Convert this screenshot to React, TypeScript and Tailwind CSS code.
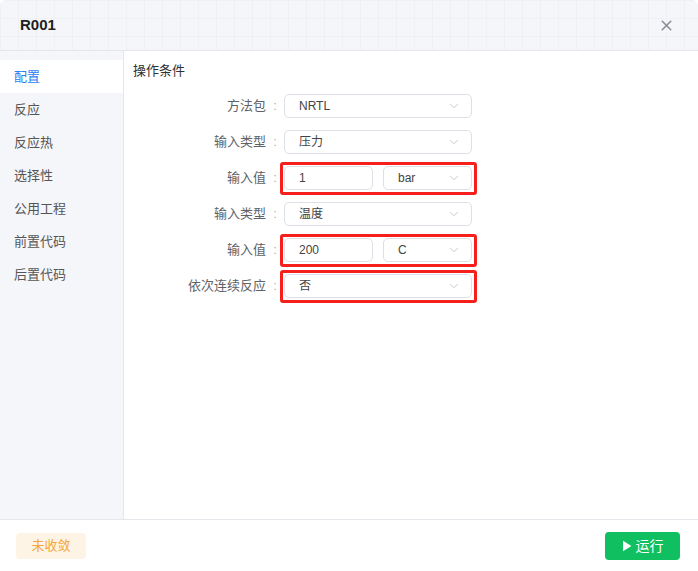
import React from 'react';
import { X, ChevronDown } from 'lucide-react';

type Field =
  | { label: string; kind: 'select'; value: string; marked?: boolean }
  | { label: string; kind: 'value'; value: string; unit: string; marked?: boolean };

const menu = ['配置', '反应', '反应热', '选择性', '公用工程', '前置代码', '后置代码'];

const fields: Field[] = [
  { label: '方法包', kind: 'select', value: 'NRTL' },
  { label: '输入类型', kind: 'select', value: '压力' },
  { label: '输入值', kind: 'value', value: '1', unit: 'bar', marked: true },
  { label: '输入类型', kind: 'select', value: '温度' },
  { label: '输入值', kind: 'value', value: '200', unit: 'C', marked: true },
  { label: '依次连续反应', kind: 'select', value: '否', marked: true },
];

function SelectBox({ value, className }: { value: string; className: string }) {
  return (
    <div
      className={`flex h-6 items-center justify-between rounded-[5px] border border-[#dcdfe6] bg-white pl-[14px] pr-[10px] text-xs text-[#444] ${className}`}
    >
      <span>{value}</span>
      <ChevronDown className="h-[14px] w-[14px] text-[#b8bcc4]" strokeWidth={1.4} />
    </div>
  );
}

function FieldRow({ field }: { field: Field }) {
  return (
    <div className="flex h-6 items-center">
      <div className="w-[133px] text-right text-[13px] text-[#606266]">{field.label}</div>
      <div className="w-[18px] text-center text-[13px] text-[#b0b3b8]">:</div>
      <div className="relative">
        {field.kind === 'select' ? (
          <SelectBox value={field.value} className="w-[188px]" />
        ) : (
          <div className="flex gap-[10px]">
            <div className="flex h-6 w-[89px] items-center rounded-[5px] border border-[#dcdfe6] bg-white pl-[14px] text-xs text-[#444]">
              {field.value}
            </div>
            <SelectBox value={field.unit} className="w-[89px]" />
          </div>
        )}
        {field.marked && (
          <div className="pointer-events-none absolute -bottom-[5px] -left-[4px] -right-[5px] -top-[4px] rounded-[3px] border-[3px] border-[#f5201b]" />
        )}
      </div>
    </div>
  );
}

export default function App() {
  return (
    <div
      className="h-[571px] w-[698px] bg-white text-[#303133]"
      style={{ fontFamily: '"Liberation Sans", "Noto Sans CJK SC", sans-serif' }}
    >
      <div className="flex h-full flex-col overflow-hidden rounded-[6px] bg-white">
        <div className="flex h-[51px] shrink-0 items-center justify-between border-b border-[#e4e6eb] bg-[#f5f6f9] bg-[linear-gradient(to_right,#eef0f4_1px,transparent_1px),linear-gradient(to_bottom,#eef0f4_1px,transparent_1px)] bg-[size:18px_18px] pl-5 pr-[23px]">
          <span className="text-[15px] font-bold text-[#1f1f1f]">R001</span>
          <X className="h-[17px] w-[17px] text-[#8a8d93]" strokeWidth={2.2} />
        </div>

        <div className="flex min-h-0 flex-1">
          <div className="w-[124px] shrink-0 border-r border-[#e4e6eb] bg-[#f5f6fa] pt-[9px]">
            {menu.map((item, i) => (
              <div
                key={item}
                className={`flex h-[33px] items-center pl-[14px] text-[13px] ${
                  i === 0 ? 'bg-white text-[#2b7ef6]' : 'text-[#555]'
                }`}
              >
                {item}
              </div>
            ))}
          </div>

          <div className="flex-1 pl-[9px] pt-[10px]">
            <div className="text-[13px] text-[#303133]">操作条件</div>
            <div className="mt-[13px] flex flex-col gap-3">
              {fields.map((f, i) => (
                <FieldRow key={i} field={f} />
              ))}
            </div>
          </div>
        </div>

        <div className="flex h-[52px] shrink-0 items-center justify-between border-t border-[#e4e6eb] pl-4 pr-[18px]">
          <div className="flex h-[26px] w-[70px] items-center justify-center rounded-[4px] bg-[#fdf4e6] text-[13px] text-[#f3a63b]">
            未收敛
          </div>
          <button className="flex h-[28px] w-[75px] items-center justify-center gap-1 rounded-[4px] bg-[#10bf5f] text-sm text-white">
            <svg width="10" height="12" viewBox="0 0 10 12">
              <path d="M1 0.8 L9.4 6 L1 11.2 Z" fill="white" />
            </svg>
            运行
          </button>
        </div>
      </div>
    </div>
  );
}
